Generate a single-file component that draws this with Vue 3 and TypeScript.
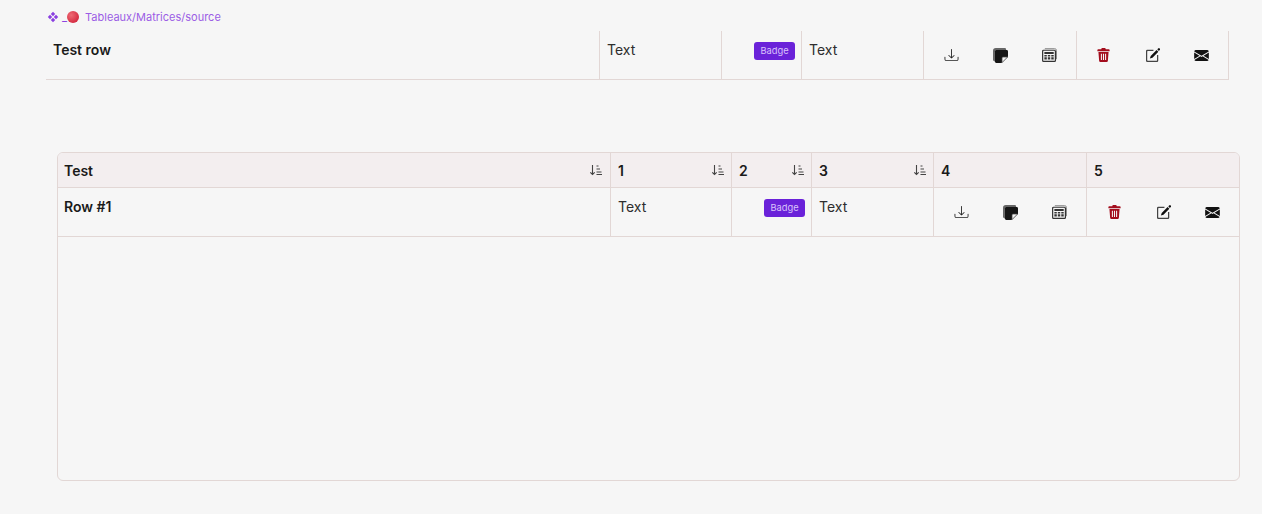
<script setup lang="ts">
interface Glyph {
  w: number
  h: number
  box: string
  paths: Record<string, string>[]
}

const download: Glyph = {
  w: 15, h: 14, box: '0 0 16 16',
  paths: [
    { fill: '#222', d: 'M.5 9.900a.5.5 0 0 1 .5.5v2.500a1 1 0 0 0 1 1h12a1 1 0 0 0 1-1v-2.500a.5.5 0 0 1 1 0v2.500a2 2 0 0 1-2 2H2a2 2 0 0 1-2-2v-2.500a.5.5 0 0 1 .5-.5z' },
    { fill: '#222', d: 'M7.650 11.850a.5.5 0 0 0 .7 0l3-3a.5.5 0 0 0-.7-.7L8.500 10.290V1.500a.5.5 0 0 0-1 0v8.790L5.350 8.150a.5.5 0 1 0-.7.7l3 3z' },
  ],
}
const sticky: Glyph = {
  w: 15, h: 15, box: '0 0 16 16',
  paths: [
    { fill: '#666', d: 'M3 0h9.500A1.500 1.500 0 0 1 14 1.500V2H3.500A1.500 1.500 0 0 0 2 3.500V14h-.5A1.500 1.500 0 0 1 0 12.500V3a3 3 0 0 1 3-3z' },
    { fill: '#151515', d: 'M3.500 2h11A1.500 1.500 0 0 1 16 3.500V9l-7 7H3.500A1.500 1.500 0 0 1 2 14.500v-11A1.500 1.500 0 0 1 3.500 2z' },
    { fill: '#f4f4f4', stroke: '#444', 'stroke-width': '.8', d: 'M9.600 15.600v-5a1 1 0 0 1 1-1h5z' },
  ],
}
const ledger: Glyph = {
  w: 15, h: 14, box: '0 0 16 15',
  paths: [
    { fill: 'none', stroke: '#888', d: 'M3 .7h10.500a2 2 0 0 1 2 2V12' },
    { fill: 'none', stroke: '#333', 'stroke-width': '1.300', d: 'M1.650 2.400h11.700a1 1 0 0 1 1 1v9.900a1 1 0 0 1-1 1H1.650a1 1 0 0 1-1-1V3.400a1 1 0 0 1 1-1z' },
    { fill: '#333', d: 'M2.500 4.300h10v2.200h-10zM2.500 7.500h2.600v1.500H2.500zM6.200 7.500h2.600v1.500H6.200zM9.900 7.500h2.600v1.500H9.900zM2.500 10h2.600v2.200H2.500zM6.200 10h2.600v2.200H6.200zM9.900 10h2.600v2.200H9.900z' },
  ],
}
const trash: Glyph = {
  w: 13, h: 14, box: '0 0 14 16',
  paths: [
    { fill: '#a30d1d', d: 'M5 0h4l.6 1.500H13a1 1 0 0 1 1 1V3.600H0V2.500a1 1 0 0 1 1-1h3.400z' },
    { fill: '#a30d1d', 'fill-rule': 'evenodd', d: 'M1.200 4.600h11.600l-.8 10a1.500 1.500 0 0 1-1.500 1.400H3.500A1.500 1.500 0 0 1 2 14.600zM4 6.500v7.300h1.200V6.500zM6.400 6.500v7.300h1.200V6.500zM8.800 6.500v7.300H10V6.500z' },
  ],
}
const edit: Glyph = {
  w: 14, h: 14, box: '0 0 16 16',
  paths: [
    { fill: '#444', 'fill-rule': 'evenodd', d: 'M1.500 2A1.500 1.500 0 0 0 0 3.500v11A1.500 1.500 0 0 0 1.500 16h11a1.500 1.500 0 0 0 1.500-1.500V8h-1.400v6.100a.5.5 0 0 1-.5.5H1.900a.5.5 0 0 1-.5-.5V3.900a.5.5 0 0 1 .5-.5h6.600V2z' },
    { fill: '#111', d: 'M15.600.5a1.200 1.200 0 0 0-1.700 0l-1 1 1.800 1.800 1-1a1.200 1.200 0 0 0 0-1.700zM12.100 2.300 5.400 9l-1 3 3-1 6.700-6.700z' },
  ],
}
const mail: Glyph = {
  w: 15, h: 11, box: '0 2 16 12',
  paths: [
    { fill: '#111', d: 'M.05 3.550A2 2 0 0 1 2 2h12a2 2 0 0 1 1.950 1.550L8 8.400zM0 4.700v7.100l5.800-3.550zM6.800 8.900.2 12.900A2 2 0 0 0 2 14h12a2 2 0 0 0 1.800-1.100l-6.600-4L8 9.600zM10.200 8.250 16 11.800V4.700z' },
  ],
}

const groups: Glyph[][] = [[download, sticky, ledger], [trash, edit, mail]]
const headers = ['Test', '1', '2', '3', '4', '5']
const sortable = [true, true, true, true, false, false]
</script>

<template>
  <div class="page">
    <div class="crumb">
      <svg class="comp" width="12" height="12" viewBox="0 0 12 12" fill="#8a3fe0">
        <path d="M6 .8 8.200 3 6 5.200 3.800 3zM3 3.800 5.200 6 3 8.200.8 6zM9 3.800 11.200 6 9 8.200 6.800 6zM6 6.800 8.200 9 6 11.200 3.800 9z" />
      </svg>
      <span class="under">_</span>
      <span class="dot"></span>
      <span class="path">Tableaux/Matrices/source</span>
    </div>

    <div class="row loose">
      <div class="cell strong">Test row</div>
      <div class="cell">Text</div>
      <div class="cell badge-cell"><span class="badge">Badge</span></div>
      <div class="cell">Text</div>
      <div v-for="(group, g) in groups" :key="g" class="cell icons">
        <span v-for="(icon, n) in group" :key="n" class="ic">
          <svg :width="icon.w" :height="icon.h" :viewBox="icon.box">
            <path v-for="(p, k) in icon.paths" :key="k" v-bind="p" />
          </svg>
        </span>
      </div>
    </div>

    <div class="table">
      <div class="row head">
        <div v-for="(h, i) in headers" :key="h" class="cell strong hcell">
          <span>{{ h }}</span>
          <svg v-if="sortable[i]" class="sort" width="14" height="14" viewBox="0 0 14 14" fill="none" stroke="#444" stroke-width="1.100">
            <path d="M3.500 2v9.500M1.300 9.300l2.200 2.200 2.200-2.200M7.500 3h2M7.500 6h3.500M7.500 9h5M7.500 11.500h5.500" />
          </svg>
        </div>
      </div>
      <div class="row body">
        <div class="cell strong">Row #1</div>
        <div class="cell">Text</div>
        <div class="cell badge-cell"><span class="badge">Badge</span></div>
        <div class="cell">Text</div>
        <div v-for="(group, g) in groups" :key="g" class="cell icons">
          <span v-for="(icon, n) in group" :key="n" class="ic">
            <svg :width="icon.w" :height="icon.h" :viewBox="icon.box">
              <path v-for="(p, k) in icon.paths" :key="k" v-bind="p" />
            </svg>
          </span>
        </div>
      </div>
    </div>
  </div>
</template>

<style>
html, body { background: #f6f6f6; }
</style>

<style scoped>
.page {
  width: 1262px;
  height: 514px;
  overflow: hidden;
  box-sizing: border-box;
  background: #f6f6f6;
  font-family: Inter, "Liberation Sans", sans-serif;
  font-size: 14px;
  color: #2e2e2e;
}
.crumb {
  height: 31px;
  box-sizing: border-box;
  padding: 10px 0 0 47px;
  display: flex;
  align-items: flex-start;
  font-size: 11px;
  line-height: 14px;
  color: #9b5de5;
}
.comp { margin-top: 1px; }
.under { margin-left: 3px; color: #8a3fe0; }
.dot {
  width: 12px;
  height: 12px;
  margin-top: 1px;
  border-radius: 50%;
  background: radial-gradient(circle at 35% 35%, #ee6a74, #d42a40 75%);
}
.path { margin-left: 6px; }
.row {
  display: grid;
  grid-template-columns: 554px 121px 80px 122px 153px 153px;
}
.loose {
  grid-template-columns: 554px 122px 80px 122px 153px 152px;
  margin-left: 46px;
  width: 1183px;
  height: 49px;
  border-bottom: 1px solid #e2d7d5;
  box-sizing: border-box;
}
.cell {
  box-sizing: border-box;
  border-right: 1px solid #e2d7d5;
  padding: 10px 7px 0;
  line-height: 17px;
  min-width: 0;
}
.strong { font-weight: 600; color: #1a1a1a; }
.badge-cell { display: flex; justify-content: flex-end; padding: 11px 6px 0 0; }
.badge {
  width: 41px;
  height: 18px;
  border-radius: 3px;
  background: #6a22d9;
  color: #d9c2fb;
  font-size: 9.300px;
  line-height: 18px;
  text-align: center;
}
.icons {
  padding: 16px 0 0;
  display: flex;
  justify-content: center;
}
.ic {
  width: 49px;
  height: 16px;
  display: flex;
  justify-content: center;
  align-items: center;
}
.table {
  margin: 72px 0 0 57px;
  width: 1183px;
  height: 329px;
  box-sizing: border-box;
  border: 1px solid #e2d7d5;
  border-radius: 6px;
  overflow: hidden;
}
.table .row { margin-left: -1px; margin-right: -1px; }
.head {
  height: 35px;
  background: #f3eeef;
  border-bottom: 1px solid #e2d7d5;
  box-sizing: border-box;
}
.hcell {
  display: flex;
  justify-content: space-between;
  padding: 9px 6px 0 7px;
}
.hcell:first-child { padding-right: 7px; }
.hcell:last-child, .body .cell:last-child { border-right: 0; }
.sort { margin-top: 1px; }
.body {
  height: 49px;
  border-bottom: 1px solid #e2d7d5;
  box-sizing: border-box;
}
</style>
